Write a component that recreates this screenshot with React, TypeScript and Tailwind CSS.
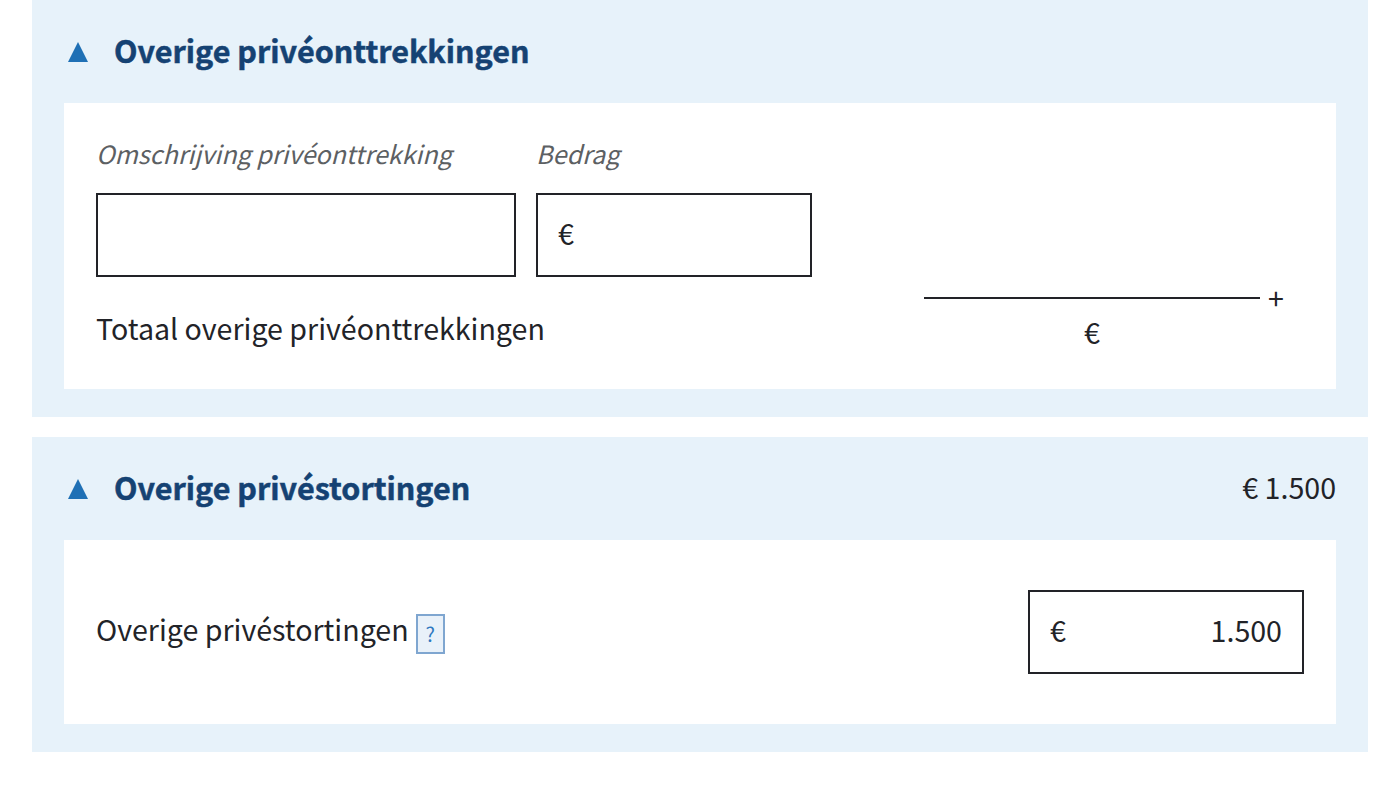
import React from "react";

interface SectionProps {
  title: string;
  total?: string;
  children: React.ReactNode;
}

const Section: React.FC<SectionProps> = ({ title, total, children }) => (
  <section className="bg-[#e7f2fa] px-8 pb-7">
    <header className="flex h-[103px] items-center justify-between">
      <h2 className="flex items-center text-[30.5px] font-bold text-[#154273]">
        <svg viewBox="0 0 20 20" className="mr-[26px] ml-1 h-5 w-5 fill-[#1f70b5]">
          <path d="M10 0 20 20H0Z" />
        </svg>
        <span className="pb-[3px] [-webkit-text-stroke:0.5px_#154273]">{title}</span>
      </h2>
      {total && <span className="pb-[3px] text-[28.6px]">{total}</span>}
    </header>
    <div className="bg-white px-8">{children}</div>
  </section>
);

interface AmountBoxProps {
  value?: string;
}

const AmountBox: React.FC<AmountBoxProps> = ({ value }) => (
  <div className="flex h-[84px] w-[276px] items-center justify-between border-2 border-[#222328] px-5 pb-[3px] text-[28.6px]">
    <span>€</span>
    {value && <span>{value}</span>}
  </div>
);

const App: React.FC = () => (
  <main className="flex h-[808px] flex-col gap-5 bg-white px-8 font-['Noto_Sans_CJK_SC','Noto_Sans',sans-serif] leading-none text-[#222328]">
    <Section title="Overige privéonttrekkingen">
      <div className="h-[286px] pt-9">
        <div className="flex gap-5">
          <div className="w-[420px]">
            <div className="h-[54px] text-[25.1px] leading-7 text-[#5c6063] italic">
              Omschrijving privéonttrekking
            </div>
            <div className="h-[84px] border-2 border-[#222328]" />
          </div>
          <div>
            <div className="h-[54px] text-[25.1px] leading-7 text-[#5c6063] italic">Bedrag</div>
            <AmountBox />
          </div>
        </div>

        {/* Total row */}
        <div className="flex justify-between pt-5 text-[28.6px]">
          <span className="pt-[17px]">Totaal overige privéonttrekkingen</span>
          <div className="flex w-[380px]">
            <div className="w-[336px] border-t-2 border-[#222328] pt-[19px] pl-40">€</div>
            <span className="-mt-[13px] pl-2">+</span>
          </div>
        </div>
      </div>
    </Section>

    <Section title="Overige privéstortingen" total="€ 1.500">
      <div className="flex h-[184px] items-center justify-between">
        <div className="flex items-center gap-[7px] text-[28.6px]">
          <span className="pb-1.5">Overige privéstortingen</span>
          <button className="mt-1 h-10 w-[29px] border-2 border-[#7fa6d0] bg-[#e9f1f9] text-xl text-[#2f78c0]">
            ?
          </button>
        </div>
        <AmountBox value="1.500" />
      </div>
    </Section>
  </main>
);

export default App;
